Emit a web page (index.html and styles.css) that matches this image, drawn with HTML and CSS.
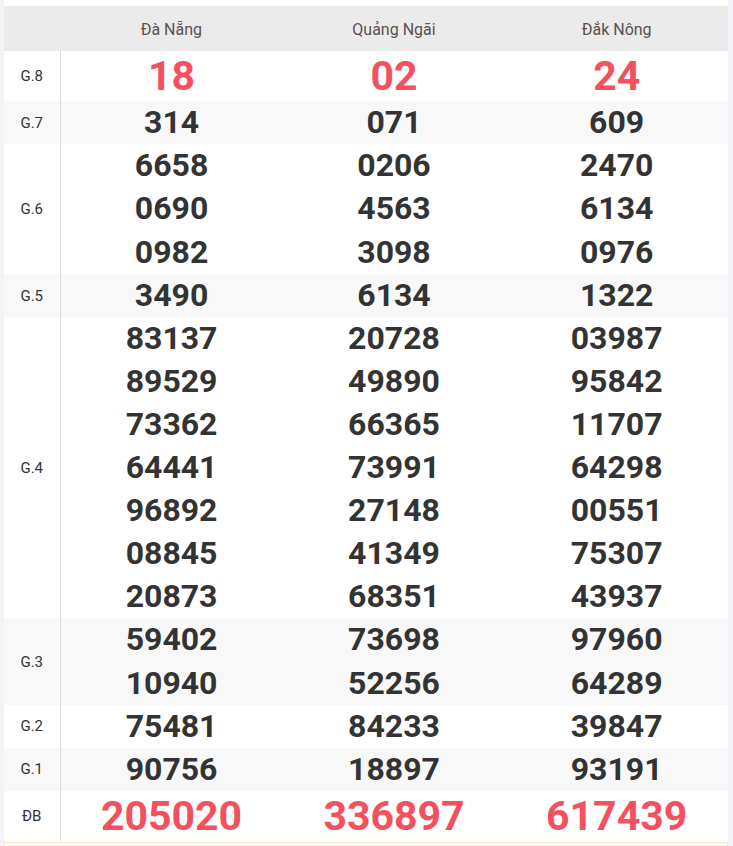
FILE: index.html
```html
<!DOCTYPE html>
<html lang="vi">
<head>
<meta charset="utf-8">
<title>Kết quả xổ số</title>
<link rel="stylesheet" href="styles.css">
</head>
<body>
<div class="wrap">
  <table class="kq">
    <thead>
      <tr class="head">
        <th class="lbl"></th>
        <th>Đà Nẵng</th>
        <th>Quảng Ngãi</th>
        <th>Đắk Nông</th>
      </tr>
    </thead>
    <tbody>
      <tr class="g8">
        <td class="lbl">G.8</td>
        <td><div class="red">18</div></td>
        <td><div class="red">02</div></td>
        <td><div class="red">24</div></td>
      </tr>
      <tr class="alt">
        <td class="lbl">G.7</td>
        <td><div>314</div></td>
        <td><div>071</div></td>
        <td><div>609</div></td>
      </tr>
      <tr class="tall">
        <td class="lbl">G.6</td>
        <td><div>6658</div><div>0690</div><div>0982</div></td>
        <td><div>0206</div><div>4563</div><div>3098</div></td>
        <td><div>2470</div><div>6134</div><div>0976</div></td>
      </tr>
      <tr class="alt">
        <td class="lbl">G.5</td>
        <td><div>3490</div></td>
        <td><div>6134</div></td>
        <td><div>1322</div></td>
      </tr>
      <tr>
        <td class="lbl">G.4</td>
        <td><div>83137</div><div>89529</div><div>73362</div><div>64441</div><div>96892</div><div>08845</div><div>20873</div></td>
        <td><div>20728</div><div>49890</div><div>66365</div><div>73991</div><div>27148</div><div>41349</div><div>68351</div></td>
        <td><div>03987</div><div>95842</div><div>11707</div><div>64298</div><div>00551</div><div>75307</div><div>43937</div></td>
      </tr>
      <tr class="alt tall">
        <td class="lbl">G.3</td>
        <td><div>59402</div><div>10940</div></td>
        <td><div>73698</div><div>52256</div></td>
        <td><div>97960</div><div>64289</div></td>
      </tr>
      <tr>
        <td class="lbl">G.2</td>
        <td><div>75481</div></td>
        <td><div>84233</div></td>
        <td><div>39847</div></td>
      </tr>
      <tr class="alt">
        <td class="lbl">G.1</td>
        <td><div>90756</div></td>
        <td><div>18897</div></td>
        <td><div>93191</div></td>
      </tr>
      <tr class="db">
        <td class="lbl">ĐB</td>
        <td><div class="red big">205020</div></td>
        <td><div class="red big">336897</div></td>
        <td><div class="red big">617439</div></td>
      </tr>
    </tbody>
  </table>
  <div class="note"></div>
</div>
</body>
</html>
```

FILE: styles.css
```css
html, body {
  margin: 0;
  padding: 0;
}
body {
  background: #f4f4f8;
  font-family: Roboto, "Liberation Sans", Arial, sans-serif;
  color: #333;
}
.wrap {
  margin: 0 5px 0 4px;
  background: #fff;
  padding-top: 6px;
  height: 840px;
}
.kq {
  width: 100%;
  border-collapse: collapse;
  table-layout: fixed;
}
.kq th, .kq td {
  padding: 0;
  text-align: center;
  vertical-align: middle;
}
.head {
  background: #ebebeb;
  border-top: 1px solid #f0e4e4;
}
.head th {
  height: 44px;
  font-weight: 400;
  font-size: 16px;
  color: #5a5050;
}
.kq .lbl {
  width: 56px;
  font-size: 15px;
  color: #333;
}
.kq tbody .lbl {
  border-right: 1px solid #dddddd;
}
.kq td div {
  font-weight: 700;
  font-size: 32px;
  line-height: 43px;
  height: 43px;
  color: #333;
}
.tall td div {
  height: 43.4px;
  line-height: 43.4px;
}
.g8 td div {
  height: 50px;
  line-height: 50px;
}
.kq td div.red {
  color: #f5505d;
  font-size: 41px;
}
.db td div {
  height: 51px;
  line-height: 51px;
}
.alt {
  background: #f8f8f8;
}
.note {
  margin-top: 0;
  height: 20px;
  border: 1px solid #f3e6c9;
  background: #fffdf6;
}
```
